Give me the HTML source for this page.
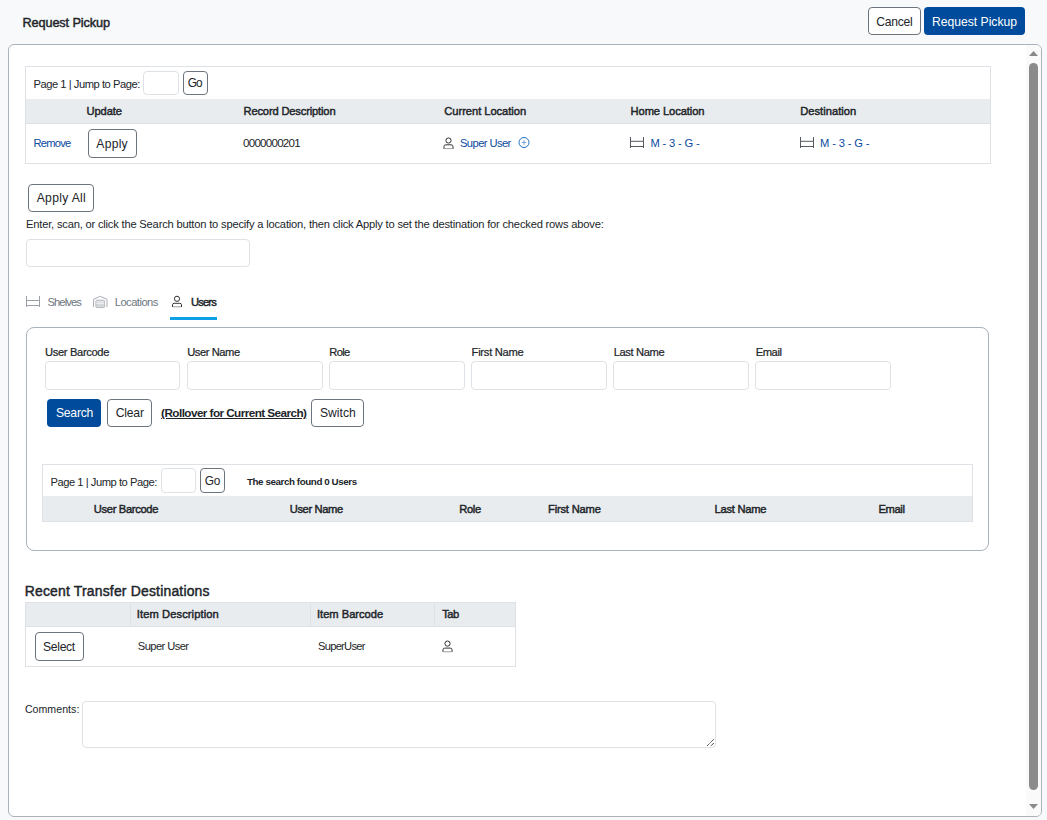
<!DOCTYPE html>
<html><head><meta charset="utf-8">
<style>
*{box-sizing:border-box;margin:0;padding:0}
html,body{width:1047px;height:820px;overflow:hidden;background:#f8f9fa;font-family:"Liberation Sans",sans-serif;color:#212529}
.a{position:absolute}
.t{position:absolute;white-space:nowrap;line-height:1}
.btn{position:absolute;border:1px solid #6c757d;border-radius:4px;background:#fff}
.btnp{position:absolute;border-radius:4px;background:#004b9b}
.inp{position:absolute;border:1px solid #dee2e6;border-radius:4px;background:#fff}
.hdr{position:absolute;background:#e9ecef}
svg{position:absolute;overflow:visible}
</style></head><body>
<!-- header buttons -->
<div class="btn" style="left:868px;top:7px;width:53px;height:28px"></div>
<div class="btnp" style="left:924px;top:7px;width:101px;height:28px"></div>

<!-- panel -->
<div class="a" style="left:8px;top:44px;width:1034px;height:773px;background:#fff;border:1px solid #aab2ba;border-radius:6px"></div>
<!-- scrollbar -->
<div class="a" style="left:1026px;top:45px;width:15px;height:771px;background:#fafafa;border-radius:0 5px 5px 0"></div>
<svg style="left:1029px;top:51px" width="9" height="5"><path d="M0 5 L4.5 0 L9 5Z" fill="#8a8a8a"/></svg>
<div class="a" style="left:1029px;top:63px;width:9px;height:727px;background:#8b8b8b;border-radius:4.5px"></div>
<svg style="left:1029px;top:804px" width="9" height="5"><path d="M0 0 L4.5 5 L9 0Z" fill="#8a8a8a"/></svg>

<!-- table 1 -->
<div class="a" style="left:25px;top:66px;width:966px;height:98px;border:1px solid #dee2e6"></div>
<div class="hdr" style="left:26px;top:99px;width:964px;height:25px;border-bottom:1px solid #dee2e6"></div>
<div class="inp" style="left:143px;top:71px;width:36px;height:24px"></div>
<div class="btn" style="left:183px;top:71px;width:25px;height:24px"></div>
<div class="btn" style="left:88px;top:129px;width:49px;height:29px"></div>
<!-- person icon -->
<svg style="left:443px;top:137px" width="12" height="13" viewBox="0 0 12 13"><circle cx="5.5" cy="3.5" r="2.6" fill="none" stroke="#333" stroke-width="1"/><path d="M1 12 V9.5 Q1 7.8 2.8 7.8 H8.2 Q10 7.8 10 9.5 V12" fill="none" stroke="#333" stroke-width="1"/><path d="M1.5 11.6 H9.5" stroke="#9aa0a6" stroke-width="1"/></svg>
<!-- plus circle -->
<svg style="left:518px;top:137px" width="12" height="12" viewBox="0 0 12 12"><circle cx="6" cy="5.5" r="5" fill="none" stroke="#1f6fbf" stroke-width="1"/><path d="M6 3.2 V7.8 M3.7 5.5 H8.3" stroke="#6a9fd4" stroke-width="0.9"/></svg>
<!-- shelf icons -->
<svg style="left:630px;top:137px" width="14" height="11" viewBox="0 0 14 11"><path d="M0.5 0 V11 M13.5 0 V11 M0.5 4.3 H13.5 M0.5 9.5 H13.5" fill="none" stroke="#555b61" stroke-width="1"/></svg>
<svg style="left:800px;top:137px" width="14" height="11" viewBox="0 0 14 11"><path d="M0.5 0 V11 M13.5 0 V11 M0.5 4.3 H13.5 M0.5 9.5 H13.5" fill="none" stroke="#555b61" stroke-width="1"/></svg>

<!-- apply all -->
<div class="btn" style="left:28px;top:184px;width:66px;height:28px"></div>
<div class="inp" style="left:26px;top:239px;width:224px;height:28px"></div>

<!-- tabs -->
<svg style="left:26px;top:296px" width="14" height="11" viewBox="0 0 14 11"><path d="M0.5 0 V11 M13.5 0 V11 M0.5 4.5 H13.5 M0.5 9.5 H13.5" fill="none" stroke="#9aa0a6" stroke-width="1"/></svg>
<svg style="left:93px;top:296px" width="15" height="12" viewBox="0 0 15 12"><path d="M0.6 11 V3.3 L7.3 0.3 L14 3.3 V11" fill="none" stroke="#a8adb3" stroke-width="1"/><rect x="2.9" y="4.2" width="8.7" height="7.4" rx="1" fill="#d3d6da" stroke="#a8adb3" stroke-width="0.8"/><path d="M3.3 5.9 H11.2 M3.3 7.6 H11.2" stroke="#f2f3f4" stroke-width="0.9"/></svg>
<svg style="left:171px;top:295px" width="12" height="13" viewBox="0 0 12 13"><circle cx="6" cy="3.8" r="2.6" fill="none" stroke="#333" stroke-width="1"/><path d="M1.5 12 V9.8 Q1.5 8.3 3.2 8.3 H8.8 Q10.5 8.3 10.5 9.8 V12" fill="none" stroke="#333" stroke-width="1"/><path d="M2 11.8 H10" stroke="#9aa0a6" stroke-width="1"/></svg>
<div class="a" style="left:170px;top:317px;width:47px;height:3px;background:#0ea0e6"></div>

<!-- search box -->
<div class="a" style="left:26px;top:327px;width:963px;height:224px;border:1px solid #aab2ba;border-radius:8px"></div>
<div class="inp" style="left:45px;top:361px;width:135px;height:29px"></div>
<div class="inp" style="left:187px;top:361px;width:136px;height:29px"></div>
<div class="inp" style="left:329px;top:361px;width:136px;height:29px"></div>
<div class="inp" style="left:471px;top:361px;width:136px;height:29px"></div>
<div class="inp" style="left:613px;top:361px;width:136px;height:29px"></div>
<div class="inp" style="left:755px;top:361px;width:136px;height:29px"></div>
<div class="btnp" style="left:47px;top:399px;width:54px;height:28px"></div>
<div class="btn" style="left:107px;top:399px;width:45px;height:28px"></div>
<div class="btn" style="left:311px;top:399px;width:53px;height:28px"></div>

<div class="a" style="left:42px;top:464px;width:931px;height:58px;border:1px solid #dee2e6"></div>
<div class="hdr" style="left:43px;top:496px;width:929px;height:25px"></div>
<div class="inp" style="left:161px;top:468px;width:35px;height:25px"></div>
<div class="btn" style="left:200px;top:468px;width:25px;height:25px"></div>

<!-- recent -->
<div class="a" style="left:25px;top:602px;width:491px;height:65px;border:1px solid #dee2e6"></div>
<div class="hdr" style="left:26px;top:603px;width:489px;height:24px;border-bottom:1px solid #dee2e6"></div>
<div class="a" style="left:130px;top:603px;width:1px;height:24px;background:#dee2e6"></div>
<div class="a" style="left:310px;top:603px;width:1px;height:24px;background:#dee2e6"></div>
<div class="a" style="left:434px;top:603px;width:1px;height:24px;background:#dee2e6"></div>
<div class="btn" style="left:35px;top:632px;width:49px;height:29px"></div>
<svg style="left:441.5px;top:640px" width="12" height="13" viewBox="0 0 12 13"><circle cx="5.5" cy="3.6" r="2.6" fill="none" stroke="#333" stroke-width="1"/><path d="M1 12 V9.7 Q1 8.1 2.8 8.1 H8.2 Q10 8.1 10 9.7 V12" fill="none" stroke="#333" stroke-width="1"/><path d="M1.5 11.8 H9.5" stroke="#9aa0a6" stroke-width="1"/></svg>

<div class="inp" style="left:82px;top:701px;width:634px;height:47px"></div>
<svg style="left:706px;top:738px" width="9" height="9" viewBox="0 0 9 9"><path d="M1 8 L8 1 " stroke="#333" stroke-width="1" stroke-dasharray="1.2 0.6"/><path d="M5 7.8 L7.8 5" stroke="#444" stroke-width="1"/></svg>
<div class="t" id="title" style="left:22.50px;top:16.60px;font-size:12.7px;font-weight:normal;color:#212529;letter-spacing:-0.108px;-webkit-text-stroke:0.45px #212529;">Request Pickup</div>
<div class="t" id="cancel" style="left:876.20px;top:15.80px;font-size:12.14px;font-weight:normal;color:#212529;letter-spacing:-0.250px;">Cancel</div>
<div class="t" id="reqbtn" style="left:931.90px;top:15.80px;font-size:12.14px;font-weight:normal;color:#ffffff;letter-spacing:0.017px;">Request Pickup</div>
<div class="t" id="page1" style="left:33.40px;top:79.00px;font-size:11.16px;font-weight:normal;color:#212529;letter-spacing:-0.447px;">Page 1 | Jump to Page:</div>
<div class="t" id="go1" style="left:187.80px;top:77.70px;font-size:11.86px;font-weight:normal;color:#212529;letter-spacing:-1.025px;">Go</div>
<div class="t" id="h_update" style="left:86.50px;top:106.00px;font-size:11.16px;font-weight:normal;color:#212529;letter-spacing:-0.094px;-webkit-text-stroke:0.45px #212529;">Update</div>
<div class="t" id="h_rec" style="left:243.50px;top:106.30px;font-size:11.16px;font-weight:normal;color:#212529;letter-spacing:-0.162px;-webkit-text-stroke:0.45px #212529;">Record Description</div>
<div class="t" id="h_cur" style="left:444.30px;top:106.20px;font-size:11.16px;font-weight:normal;color:#212529;letter-spacing:-0.045px;-webkit-text-stroke:0.45px #212529;">Current Location</div>
<div class="t" id="h_home" style="left:630.60px;top:106.20px;font-size:11.16px;font-weight:normal;color:#212529;letter-spacing:-0.094px;-webkit-text-stroke:0.45px #212529;">Home Location</div>
<div class="t" id="h_dest" style="left:800.20px;top:106.20px;font-size:11.16px;font-weight:normal;color:#212529;letter-spacing:0.019px;-webkit-text-stroke:0.45px #212529;">Destination</div>
<div class="t" id="remove" style="left:33.40px;top:137.80px;font-size:11.16px;font-weight:normal;color:#0a4aa0;letter-spacing:-0.747px;">Remove</div>
<div class="t" id="apply" style="left:96.30px;top:137.80px;font-size:12.14px;font-weight:normal;color:#212529;letter-spacing:0.258px;">Apply</div>
<div class="t" id="recno" style="left:243.00px;top:137.90px;font-size:11.58px;font-weight:normal;color:#212529;letter-spacing:-0.750px;">0000000201</div>
<div class="t" id="superuser" style="left:460.00px;top:137.80px;font-size:11.16px;font-weight:normal;color:#0a4aa0;letter-spacing:-0.568px;">Super User</div>
<div class="t" id="m3g1" style="left:650.40px;top:137.80px;font-size:11.16px;font-weight:normal;color:#0a4aa0;letter-spacing:-0.150px;">M - 3 - G -</div>
<div class="t" id="m3g2" style="left:820.10px;top:137.80px;font-size:11.16px;font-weight:normal;color:#0a4aa0;letter-spacing:-0.150px;">M - 3 - G -</div>
<div class="t" id="applyall" style="left:36.70px;top:191.70px;font-size:12.14px;font-weight:normal;color:#212529;letter-spacing:0.327px;">Apply All</div>
<div class="t" id="desc" style="left:26.00px;top:219.00px;font-size:11.16px;font-weight:normal;color:#212529;letter-spacing:-0.195px;">Enter, scan, or click the Search button to specify a location, then click Apply to set the destination for checked rows above:</div>
<div class="t" id="tab_shelves" style="left:47.50px;top:297.00px;font-size:11.16px;font-weight:normal;color:#6c757d;letter-spacing:-0.902px;">Shelves</div>
<div class="t" id="tab_loc" style="left:114.70px;top:297.00px;font-size:11.16px;font-weight:normal;color:#6c757d;letter-spacing:-0.510px;">Locations</div>
<div class="t" id="tab_users" style="left:190.90px;top:297.00px;font-size:11.16px;font-weight:normal;color:#212529;letter-spacing:-0.814px;-webkit-text-stroke:0.45px #212529;">Users</div>
<div class="t" id="l_ub" style="left:45.00px;top:347.00px;font-size:11.16px;font-weight:normal;color:#212529;letter-spacing:-0.346px;-webkit-text-stroke:0.22px #212529;">User Barcode</div>
<div class="t" id="l_un" style="left:187.20px;top:347.00px;font-size:11.16px;font-weight:normal;color:#212529;letter-spacing:-0.426px;-webkit-text-stroke:0.22px #212529;">User Name</div>
<div class="t" id="l_role" style="left:329.20px;top:347.00px;font-size:11.16px;font-weight:normal;color:#212529;letter-spacing:-0.613px;-webkit-text-stroke:0.22px #212529;">Role</div>
<div class="t" id="l_fn" style="left:471.60px;top:347.00px;font-size:11.16px;font-weight:normal;color:#212529;letter-spacing:-0.260px;-webkit-text-stroke:0.22px #212529;">First Name</div>
<div class="t" id="l_ln" style="left:613.70px;top:347.00px;font-size:11.16px;font-weight:normal;color:#212529;letter-spacing:-0.368px;-webkit-text-stroke:0.22px #212529;">Last Name</div>
<div class="t" id="l_em" style="left:755.70px;top:347.00px;font-size:11.16px;font-weight:normal;color:#212529;letter-spacing:-0.404px;-webkit-text-stroke:0.22px #212529;">Email</div>
<div class="t" id="search" style="left:55.90px;top:407.00px;font-size:12.14px;font-weight:normal;color:#ffffff;letter-spacing:-0.195px;">Search</div>
<div class="t" id="clear" style="left:115.70px;top:407.00px;font-size:12.14px;font-weight:normal;color:#212529;letter-spacing:-0.184px;">Clear</div>
<div class="t" id="rollover" style="left:161.10px;top:407.00px;font-size:11.72px;font-weight:bold;color:#212529;letter-spacing:-0.560px;text-decoration:underline;">(Rollover for Current Search)</div>
<div class="t" id="switch" style="left:320.00px;top:407.00px;font-size:12.14px;font-weight:normal;color:#212529;letter-spacing:0.006px;">Switch</div>
<div class="t" id="page2" style="left:50.40px;top:476.50px;font-size:11.16px;font-weight:normal;color:#212529;letter-spacing:-0.452px;">Page 1 | Jump to Page:</div>
<div class="t" id="go2" style="left:204.75px;top:476.00px;font-size:11.86px;font-weight:normal;color:#212529;letter-spacing:-0.225px;">Go</div>
<div class="t" id="found" style="left:247.00px;top:476.90px;font-size:9.77px;font-weight:bold;color:#212529;letter-spacing:-0.403px;">The search found 0 Users</div>
<div class="t" id="h2_ub" style="left:93.80px;top:504.20px;font-size:11.16px;font-weight:normal;color:#212529;letter-spacing:-0.327px;-webkit-text-stroke:0.45px #212529;">User Barcode</div>
<div class="t" id="h2_un" style="left:289.70px;top:504.20px;font-size:11.16px;font-weight:normal;color:#212529;letter-spacing:-0.364px;-webkit-text-stroke:0.45px #212529;">User Name</div>
<div class="t" id="h2_role" style="left:459.20px;top:504.20px;font-size:11.16px;font-weight:normal;color:#212529;letter-spacing:-0.313px;-webkit-text-stroke:0.45px #212529;">Role</div>
<div class="t" id="h2_fn" style="left:548.00px;top:504.20px;font-size:11.16px;font-weight:normal;color:#212529;letter-spacing:-0.182px;-webkit-text-stroke:0.45px #212529;">First Name</div>
<div class="t" id="h2_ln" style="left:714.50px;top:504.20px;font-size:11.16px;font-weight:normal;color:#212529;letter-spacing:-0.255px;-webkit-text-stroke:0.45px #212529;">Last Name</div>
<div class="t" id="h2_em" style="left:878.40px;top:504.20px;font-size:11.16px;font-weight:normal;color:#212529;letter-spacing:-0.329px;-webkit-text-stroke:0.45px #212529;">Email</div>
<div class="t" id="recent" style="left:24.70px;top:585.00px;font-size:13.95px;font-weight:normal;color:#212529;letter-spacing:0.189px;-webkit-text-stroke:0.45px #212529;">Recent Transfer Destinations</div>
<div class="t" id="h3_desc" style="left:136.80px;top:608.90px;font-size:11.16px;font-weight:normal;color:#212529;letter-spacing:0.087px;-webkit-text-stroke:0.45px #212529;">Item Description</div>
<div class="t" id="h3_bc" style="left:317.00px;top:608.90px;font-size:11.16px;font-weight:normal;color:#212529;letter-spacing:-0.013px;-webkit-text-stroke:0.45px #212529;">Item Barcode</div>
<div class="t" id="h3_tab" style="left:442.30px;top:608.90px;font-size:11.16px;font-weight:normal;color:#212529;letter-spacing:-0.541px;-webkit-text-stroke:0.45px #212529;">Tab</div>
<div class="t" id="select" style="left:43.07px;top:640.80px;font-size:12.14px;font-weight:normal;color:#212529;letter-spacing:-0.320px;">Select</div>
<div class="t" id="su2" style="left:137.80px;top:641.20px;font-size:11.16px;font-weight:normal;color:#212529;letter-spacing:-0.579px;">Super User</div>
<div class="t" id="su3" style="left:318.00px;top:641.20px;font-size:11.16px;font-weight:normal;color:#212529;letter-spacing:-0.739px;">SuperUser</div>
<div class="t" id="comments" style="left:24.90px;top:703.90px;font-size:10.6px;font-weight:normal;color:#212529;letter-spacing:0.036px;">Comments:</div>
</body></html>
